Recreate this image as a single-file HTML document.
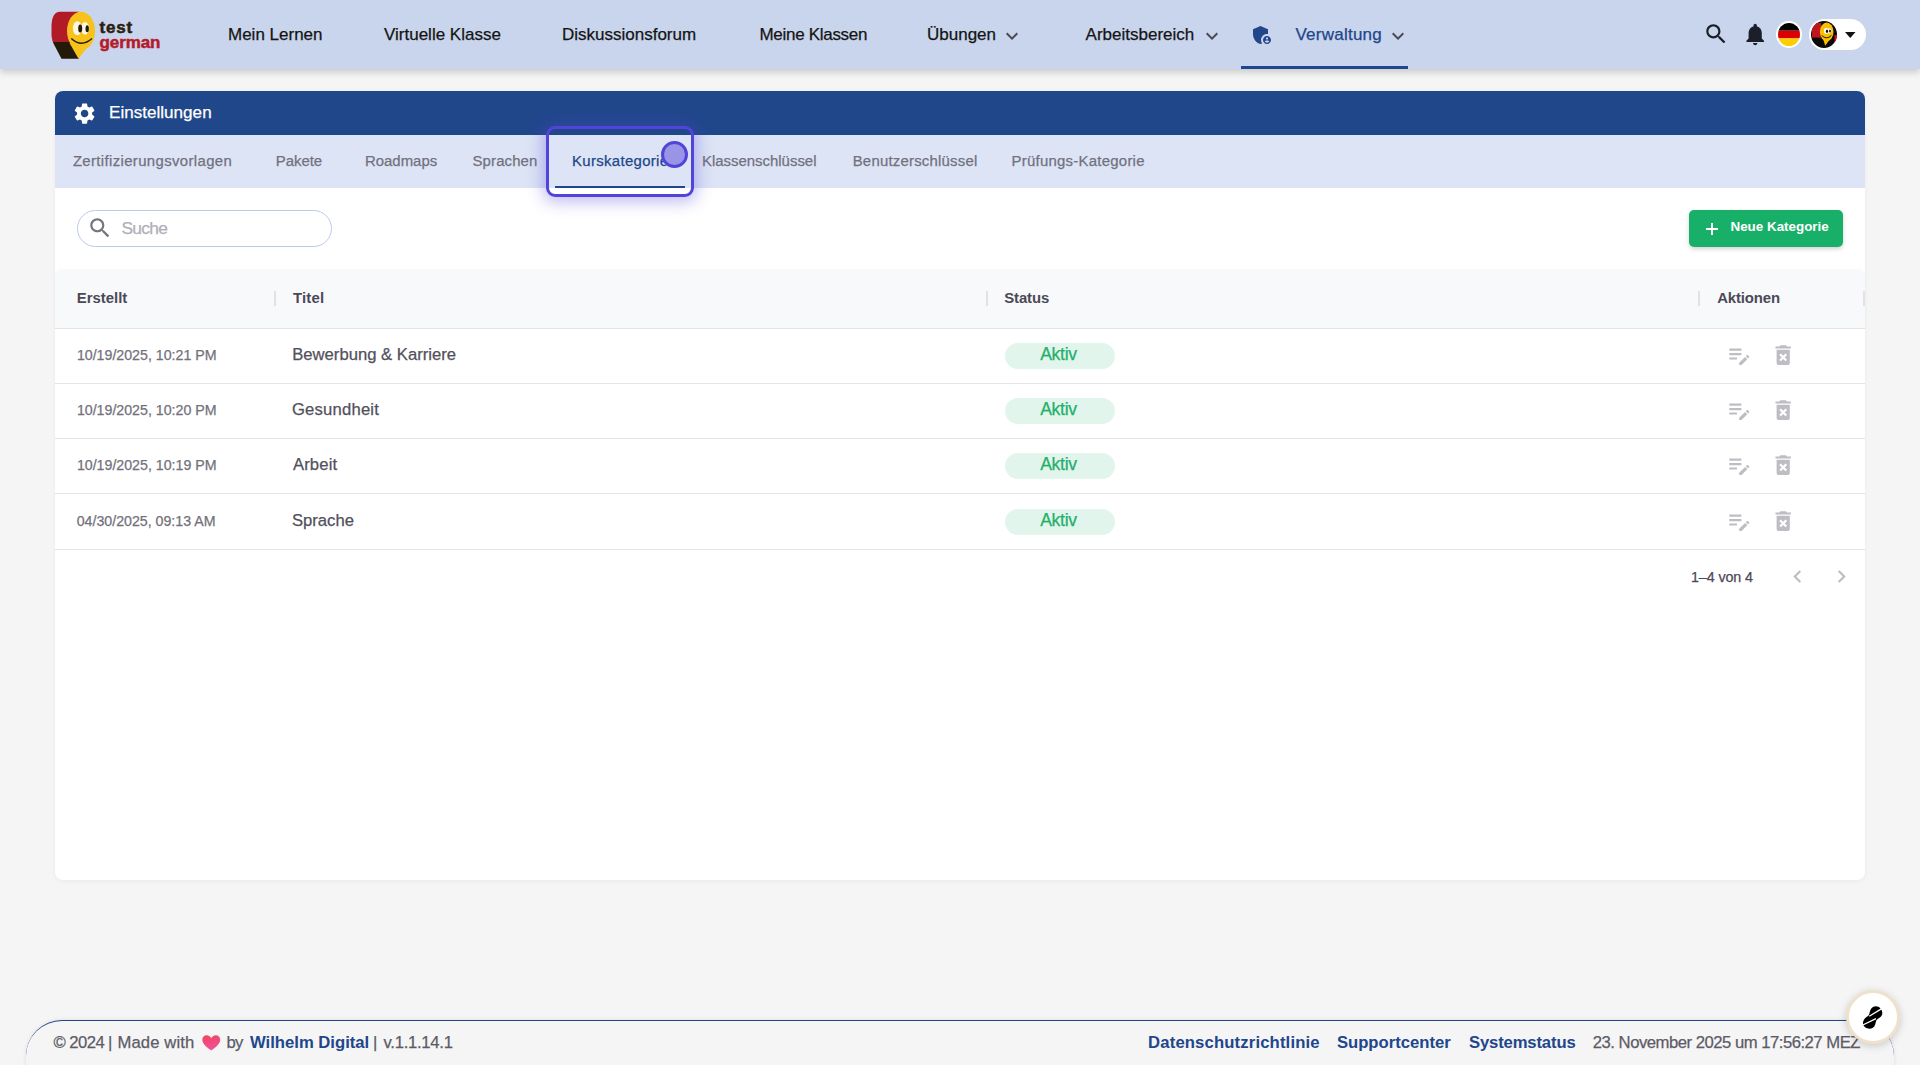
<!DOCTYPE html>
<html><head><meta charset="utf-8">
<style>
*{box-sizing:border-box;margin:0;padding:0}
html,body{width:1920px;height:1065px;overflow:hidden;background:#f5f5f5;font-family:"Liberation Sans",sans-serif;position:relative}
.a{position:absolute;white-space:nowrap;line-height:1;-webkit-text-stroke:0.25px currentColor}
svg{position:absolute;overflow:visible}
#hdr{position:absolute;left:0;top:0;width:1920px;height:69px;background:#c9d5ec;box-shadow:0 3px 7px rgba(0,0,0,.19)}
.nav{font-size:17px;color:#141414;top:25.7px}
#card{position:absolute;left:55px;top:91px;width:1810px;height:789px;background:#fff;border-radius:8px;box-shadow:0 1px 4px rgba(0,0,0,.05)}
#cardhead{position:absolute;left:55px;top:91px;width:1810px;height:44px;background:#21478b;border-radius:8px 8px 0 0}
#tabs{position:absolute;left:55px;top:135px;width:1810px;height:53px;background:#dce4f5}
.tab{font-size:14.93px;color:#72717e;top:154.4px}
.th{font-size:14.93px;font-weight:700;color:#4b4957;top:291.4px}
.sep{position:absolute;width:2px;height:15px;top:291px;background:#e1e1e6}
.date{font-size:14.2px;color:#72717b}
.ttl{font-size:16.67px;color:#52505c}
.pill{position:absolute;left:1005px;width:110px;height:26px;border-radius:13px;background:#e2f5ec}
.aktiv{font-size:17.6px;letter-spacing:-0.3px;color:#22b06b}
.hr{position:absolute;left:55px;width:1810px;height:1px;background:#e5e5e9}
.ft{font-size:16.67px;color:#5d5b67;top:1034.8px}
.lnk{font-size:16.67px;font-weight:700;color:#21468b;top:1034.9px}
.th,.lnk,.bd{-webkit-text-stroke:0}
</style></head><body>
<div id="hdr"></div>

<!-- nav -->
<div class="a nav" style="left:228px">Mein Lernen</div>
<div class="a nav" style="left:384px">Virtuelle Klasse</div>
<div class="a nav" style="left:562px">Diskussionsforum</div>
<div class="a nav" style="left:759.5px;letter-spacing:-0.3px">Meine Klassen</div>
<div class="a nav" style="left:927px">Übungen</div>
<div class="a nav" style="left:1085.6px">Arbeitsbereich</div>
<div class="a nav" style="left:1295.4px;color:#21468a;letter-spacing:0.25px">Verwaltung</div>
<div class="a" style="left:1241px;top:66px;width:167px;height:3px;background:#1f4690"></div>
<!-- chevrons -->
<svg style="left:1000px;top:24.4px" width="24" height="24" viewBox="0 0 24 24"><path fill="#4a4955" d="M16.59 8.59 12 13.17 7.41 8.59 6 10l6 6 6-6z"/></svg>
<svg style="left:1200px;top:24.4px" width="24" height="24" viewBox="0 0 24 24"><path fill="#4a4955" d="M16.59 8.59 12 13.17 7.41 8.59 6 10l6 6 6-6z"/></svg>
<svg style="left:1386px;top:24.4px" width="24" height="24" viewBox="0 0 24 24"><path fill="#4a4955" d="M16.59 8.59 12 13.17 7.41 8.59 6 10l6 6 6-6z"/></svg>
<!-- shield -->
<svg style="left:1250px;top:23px" width="24" height="24" viewBox="0 0 24 24"><path fill="#21468b" d="M17 11c.34 0 .67.04 1 .09V6.27L10.5 3 3 6.27v4.91c0 4.54 3.2 8.79 7.5 9.82.55-.13 1.08-.32 1.6-.55-.69-.98-1.1-2.17-1.1-3.45 0-3.31 2.69-6 6-6zM17 13c-2.21 0-4 1.79-4 4s1.79 4 4 4 4-1.79 4-4-1.79-4-4-4zm0 1.38c.62 0 1.12.51 1.12 1.12s-.51 1.12-1.12 1.12-1.12-.51-1.12-1.12.5-1.12 1.12-1.12zm0 5.37c-.93 0-1.74-.46-2.24-1.17.05-.72 1.51-1.08 2.24-1.08s2.19.36 2.24 1.08c-.5.71-1.31 1.17-2.24 1.17z"/></svg>
<!-- search -->
<svg style="left:1702.7px;top:20.7px" width="26.2" height="26.2" viewBox="0 0 24 24"><path fill="#1b1f2a" d="M15.5 14h-.79l-.28-.27C15.41 12.59 16 11.11 16 9.5 16 5.91 13.09 3 9.5 3S3 5.91 3 9.5 5.91 16 9.5 16c1.61 0 3.09-.59 4.23-1.57l.27.28v.79l5 4.99L20.49 19l-4.99-5zm-6 0C7.01 14 5 11.99 5 9.5S7.01 5 9.5 5 14 7.01 14 9.5 11.99 14 9.5 14z"/></svg>
<!-- bell -->
<svg style="left:1741.6px;top:21.2px" width="26.4" height="26.4" viewBox="0 0 24 24"><path fill="#1b1f2a" d="M12 22c1.1 0 2-.9 2-2h-4c0 1.1.89 2 2 2zm6-6v-5c0-3.07-1.64-5.64-4.5-6.32V4c0-.83-.67-1.5-1.5-1.5s-1.5.67-1.5 1.5v.68C7.63 5.36 6 7.92 6 11v5l-2 2v1h16v-1l-2-2z"/></svg>
<!-- flag -->
<div class="a" style="left:1776px;top:21px;width:26px;height:27px;border-radius:50%;background:#fff"></div>
<svg style="left:1778px;top:23px" width="22" height="23" viewBox="0 0 22 23"><defs><clipPath id="fc"><ellipse cx="11" cy="11.5" rx="11" ry="11.5"/></clipPath></defs><g clip-path="url(#fc)"><rect x="0" y="0" width="22" height="7.7" fill="#000"/><rect x="0" y="7.7" width="22" height="7.7" fill="#dd0000"/><rect x="0" y="15.4" width="22" height="8" fill="#ffce00"/></g></svg>
<!-- avatar pill -->
<div class="a" style="left:1809px;top:18.5px;width:57px;height:31.5px;border-radius:16px;background:#fff"></div>
<svg style="left:1811px;top:21px" width="26" height="27" viewBox="0 0 26 27"><defs><clipPath id="ac"><ellipse cx="13" cy="13.5" rx="13" ry="13.5"/></clipPath></defs><g clip-path="url(#ac)"><rect width="26" height="27" fill="#0a0a0a"/><rect x="1" y="2" width="9" height="14.6" fill="#c0141f"/><path d="M23.5 14 L26 14 L26 21 L23.5 21Z" fill="#c0141f"/><ellipse cx="15.7" cy="10.8" rx="6.8" ry="9.3" fill="#f9c000"/><path d="M11.2 15 L19.5 17.5 L14.2 24.8Z" fill="#f9c000"/><ellipse cx="15.3" cy="10" rx="2.4" ry="2.9" fill="#fff"/><ellipse cx="18.4" cy="9.8" rx="2" ry="2.6" fill="#fff"/><ellipse cx="16" cy="10.3" rx="1.1" ry="1.7" fill="#0a0a0a"/><ellipse cx="19" cy="10.1" rx="0.9" ry="1.5" fill="#0a0a0a"/><path d="M10.7 14.4 Q15.5 19.3 20.4 14.4" stroke="#0a0a0a" stroke-width="0.9" fill="none"/></g></svg>
<svg style="left:1845px;top:31.7px" width="11" height="6" viewBox="0 0 11 6"><path d="M0 0h10.5L5.25 6z" fill="#111"/></svg>
<!-- logo -->
<svg style="left:0;top:0" width="170" height="69" viewBox="0 0 170 69">
<defs><clipPath id="lc"><path d="M79 11.7 L60 11.7 Q51.5 12 51.5 27 L51.5 36 Q52 41 54 44.5 L61.5 58.7 L79 58.7Z"/></clipPath></defs>
<g clip-path="url(#lc)"><rect x="40" y="0" width="50" height="42" fill="#b11b28"/><rect x="40" y="42" width="50" height="20" fill="#231a0a"/></g>
<ellipse cx="81" cy="31" rx="14" ry="19.3" fill="#f7c21c"/>
<path d="M69.5 43 L86 49 L78.5 58.7 Z" fill="#f7c21c"/>
<ellipse cx="77.3" cy="28.3" rx="4.4" ry="7" fill="#fdf6e0"/>
<ellipse cx="85" cy="28.2" rx="4" ry="6.3" fill="#fdf6e0"/>
<ellipse cx="80.2" cy="28.5" rx="2" ry="3.9" fill="#231a0a"/>
<ellipse cx="87.2" cy="28.8" rx="1.7" ry="3.5" fill="#231a0a"/>
<path d="M71.3 38.5 Q81.5 48 92 38.6" stroke="#231a0a" stroke-width="1.4" fill="none"/>
<text x="99.5" y="32.5" font-family="Liberation Sans" font-weight="700" font-size="17" fill="#2a200e" stroke="#2a200e" stroke-width="0.5" letter-spacing="0.85">test</text>
<text x="99.5" y="48" font-family="Liberation Sans" font-weight="700" font-size="17" fill="#b51a2b" stroke="#b51a2b" stroke-width="0.5" letter-spacing="-0.1">german</text>
</svg>

<div id="card"></div>
<div id="cardhead"></div>
<div id="tabs"></div>
<div class="a" style="left:109px;top:103.5px;font-size:17.1px;color:#fff">Einstellungen</div>
<div class="a tab" style="left:72.9px;letter-spacing:0.36px">Zertifizierungsvorlagen</div>
<div class="a tab" style="left:275.7px">Pakete</div>
<div class="a tab" style="left:365px">Roadmaps</div>
<div class="a tab" style="left:472.5px;letter-spacing:0.14px">Sprachen</div>
<div class="a tab" style="left:572px;letter-spacing:0.33px;color:#21468a">Kurskategorie</div>
<div class="a tab" style="left:702px">Klassenschlüssel</div>
<div class="a tab" style="left:852.7px;letter-spacing:0.22px">Benutzerschlüssel</div>
<div class="a tab" style="left:1011.5px;letter-spacing:0.26px">Prüfungs-Kategorie</div>
<div class="a" style="left:555px;top:186px;width:130px;height:2px;background:#1f4690"></div>

<!-- search -->
<div class="a" style="left:77px;top:210px;width:255px;height:37px;border:1px solid #bccaea;border-radius:19px;background:#fff"></div>
<div class="a" style="left:121.5px;top:220.2px;font-size:17.4px;letter-spacing:-0.75px;color:#b0afb8">Suche</div>

<!-- button -->
<div class="a" style="left:1689px;top:210px;width:154px;height:37px;border-radius:5px;background:#18b068;box-shadow:0 2px 4px rgba(0,0,0,.18)"></div>
<div class="a" style="left:1730.5px;top:220.2px;font-size:13.4px;font-weight:700;letter-spacing:0px;color:#fff;-webkit-text-stroke:0">Neue Kategorie</div>
<div class="a" style="left:1706px;top:228px;width:12px;height:2px;background:#fff"></div>
<div class="a" style="left:1711px;top:223px;width:2px;height:12px;background:#fff"></div>

<!-- table header -->
<div class="a" style="left:55px;top:269px;width:1810px;height:59px;background:#f8f9fb;border-radius:6px 6px 0 0"></div>
<div class="hr" style="top:328px;height:1px;background:#e3e3e7"></div>
<div class="a th" style="left:76.7px">Erstellt</div>
<div class="a th" style="left:293px;letter-spacing:0.19px">Titel</div>
<div class="a th" style="left:1004.3px;letter-spacing:-0.14px">Status</div>
<div class="a th" style="left:1717.2px;letter-spacing:-0.13px">Aktionen</div>
<div class="sep" style="left:274px"></div>
<div class="sep" style="left:986px"></div>
<div class="sep" style="left:1698px"></div>
<div class="sep" style="left:1863px"></div>

<!-- rows -->
<div class="hr" style="top:383px"></div>
<div class="hr" style="top:438px"></div>
<div class="hr" style="top:493px"></div>
<div class="hr" style="top:549px"></div>

<div class="a date" style="left:76.9px;top:348px">10/19/2025, 10:21 PM</div>
<div class="a date" style="left:76.9px;top:403px">10/19/2025, 10:20 PM</div>
<div class="a date" style="left:76.9px;top:458px">10/19/2025, 10:19 PM</div>
<div class="a date" style="left:76.7px;top:513.6px">04/30/2025, 09:13 AM</div>

<div class="a ttl" style="left:292.2px;top:346.5px">Bewerbung &amp; Karriere</div>
<div class="a ttl" style="left:291.9px;top:402.3px;letter-spacing:0.2px">Gesundheit</div>
<div class="a ttl" style="left:292.9px;top:456.7px;letter-spacing:0.16px">Arbeit</div>
<div class="a ttl" style="left:291.9px;top:512.5px">Sprache</div>

<div class="pill" style="top:343px"></div>
<div class="pill" style="top:398px"></div>
<div class="pill" style="top:453px"></div>
<div class="pill" style="top:508.7px"></div>
<div class="a aktiv" style="left:1040.2px;top:345.6px">Aktiv</div>
<div class="a aktiv" style="left:1040.2px;top:400.6px">Aktiv</div>
<div class="a aktiv" style="left:1040.2px;top:456.1px">Aktiv</div>
<div class="a aktiv" style="left:1040.2px;top:512.1px">Aktiv</div>

<!-- pagination -->
<div class="a" style="left:1691px;top:570px;font-size:14.3px;letter-spacing:-0.1px;color:#4b4957">1–4 von 4</div>

<!-- footer -->
<div class="a" style="left:26px;top:1020px;width:1868px;height:90px;border-top:1.5px solid #21468b;border-radius:36px;box-shadow:0 0 4px rgba(0,0,0,.10)"></div>
<div class="a ft" style="left:53.5px;letter-spacing:-0.55px">© 2024</div>
<div class="a ft" style="left:108px">|</div>
<div class="a ft" style="left:117.4px;letter-spacing:0.12px">Made with</div>
<div class="a ft" style="left:226.5px;letter-spacing:-0.75px">by</div>
<div class="a ft bd" style="left:250px;font-weight:700;color:#21468b">Wilhelm Digital</div>
<div class="a ft" style="left:373px">|</div>
<div class="a ft" style="left:383.5px;letter-spacing:-0.28px">v.1.1.14.1</div>
<div class="a lnk" style="left:1148.1px;letter-spacing:0.15px">Datenschutzrichtlinie</div>
<div class="a lnk" style="left:1336.9px">Supportcenter</div>
<div class="a lnk" style="left:1469px;letter-spacing:-0.15px">Systemstatus</div>
<div class="a ft" style="left:1592.8px;top:1034.9px;letter-spacing:-0.49px">23. November 2025 um 17:56:27 MEZ</div>

<!-- gear -->
<svg style="left:71.9px;top:100.7px" width="25.2" height="25.2" viewBox="0 0 24 24"><path fill="#fff" d="M19.14 12.94c.04-.3.06-.61.06-.94 0-.32-.02-.64-.07-.94l2.03-1.58c.18-.14.23-.41.12-.61l-1.92-3.32c-.12-.22-.37-.29-.59-.22l-2.39.96c-.5-.38-1.030-.7-1.62-.94l-.36-2.54c-.04-.24-.24-.41-.48-.41h-3.84c-.24 0-.43.17-.47.41l-.36 2.54c-.59.24-1.13.57-1.62.94l-2.39-.96c-.22-.08-.47 0-.59.22L2.74 8.87c-.12.21-.08.47.12.61l2.03 1.58c-.05.3-.09.63-.09.94s.02.64.07.94l-2.03 1.58c-.18.14-.23.41-.12.61l1.92 3.32c.12.22.37.29.59.22l2.39-.96c.5.38 1.03.7 1.62.94l.36 2.54c.05.24.24.41.48.41h3.84c.24 0 .44-.17.47-.41l.36-2.54c.59-.24 1.13-.56 1.62-.94l2.39.96c.22.08.47 0 .59-.22l1.92-3.32c.12-.22.07-.47-.12-.61l-2.01-1.58zM12 15.6c-1.98 0-3.6-1.62-3.6-3.6s1.62-3.6 3.6-3.6 3.6 1.62 3.6 3.6-1.62 3.6-3.6 3.6z"/></svg>
<!-- search input icon -->
<svg style="left:86.7px;top:215.1px" width="26" height="26" viewBox="0 0 24 24"><path fill="#75737d" d="M15.5 14h-.79l-.28-.27C15.41 12.59 16 11.11 16 9.5 16 5.91 13.09 3 9.5 3S3 5.91 3 9.5 5.91 16 9.5 16c1.61 0 3.09-.59 4.230-1.57l.27.28v.79l5 4.99L20.49 19l-4.99-5zm-6 0C7.01 14 5 11.99 5 9.5S7.01 5 9.5 5 14 7.01 14 9.5 11.99 14 9.5 14z"/></svg>
<svg style="left:1726px;top:342px" width="26.4" height="26.4" viewBox="0 0 24 24"><path fill="#bebdc4" d="M3 10h11v2H3v-2zm0-2h11V6H3v2zm0 8h7v-2H3v2zm15.01-3.13.71-.71c.39-.39 1.02-.39 1.41 0l.71.71c.39.39.39 1.02 0 1.41l-.71.71-2.12-2.12zm-.71.71-5.3 5.3V21h2.12l5.3-5.3-2.12-2.12z"/></svg>
<svg style="left:1770px;top:342px" width="26.4" height="26.4" viewBox="0 0 24 24"><path fill="#bebdc4" d="M6 19c0 1.1.9 2 2 2h8c1.1 0 2-.9 2-2V7H6v12zm2.46-7.12 1.41-1.41L12 12.59l2.12-2.12 1.41 1.41L13.41 14l2.12 2.12-1.41 1.41L12 15.41l-2.12 2.12-1.41-1.41L10.59 14l-2.13-2.12zM15.5 4l-1-1h-5l-1 1H5v2h14V4z"/></svg>
<svg style="left:1726px;top:397px" width="26.4" height="26.4" viewBox="0 0 24 24"><path fill="#bebdc4" d="M3 10h11v2H3v-2zm0-2h11V6H3v2zm0 8h7v-2H3v2zm15.01-3.13.71-.71c.39-.39 1.02-.39 1.41 0l.71.71c.39.39.39 1.02 0 1.41l-.71.71-2.12-2.12zm-.71.71-5.3 5.3V21h2.12l5.3-5.3-2.12-2.12z"/></svg>
<svg style="left:1770px;top:397px" width="26.4" height="26.4" viewBox="0 0 24 24"><path fill="#bebdc4" d="M6 19c0 1.1.9 2 2 2h8c1.1 0 2-.9 2-2V7H6v12zm2.46-7.12 1.41-1.41L12 12.59l2.12-2.12 1.41 1.41L13.41 14l2.12 2.12-1.41 1.41L12 15.41l-2.12 2.12-1.41-1.41L10.59 14l-2.13-2.12zM15.5 4l-1-1h-5l-1 1H5v2h14V4z"/></svg>
<svg style="left:1726px;top:452px" width="26.4" height="26.4" viewBox="0 0 24 24"><path fill="#bebdc4" d="M3 10h11v2H3v-2zm0-2h11V6H3v2zm0 8h7v-2H3v2zm15.01-3.13.71-.71c.39-.39 1.02-.39 1.41 0l.71.71c.39.39.39 1.02 0 1.41l-.71.71-2.12-2.12zm-.71.71-5.3 5.3V21h2.12l5.3-5.3-2.12-2.12z"/></svg>
<svg style="left:1770px;top:452px" width="26.4" height="26.4" viewBox="0 0 24 24"><path fill="#bebdc4" d="M6 19c0 1.1.9 2 2 2h8c1.1 0 2-.9 2-2V7H6v12zm2.46-7.12 1.41-1.41L12 12.59l2.12-2.12 1.41 1.41L13.41 14l2.12 2.12-1.41 1.41L12 15.41l-2.12 2.12-1.41-1.41L10.59 14l-2.13-2.12zM15.5 4l-1-1h-5l-1 1H5v2h14V4z"/></svg>
<svg style="left:1726px;top:507.5px" width="26.4" height="26.4" viewBox="0 0 24 24"><path fill="#bebdc4" d="M3 10h11v2H3v-2zm0-2h11V6H3v2zm0 8h7v-2H3v2zm15.01-3.13.71-.71c.39-.39 1.02-.39 1.41 0l.71.71c.39.39.39 1.02 0 1.41l-.71.71-2.12-2.12zm-.71.71-5.3 5.3V21h2.12l5.3-5.3-2.12-2.12z"/></svg>
<svg style="left:1770px;top:507.5px" width="26.4" height="26.4" viewBox="0 0 24 24"><path fill="#bebdc4" d="M6 19c0 1.1.9 2 2 2h8c1.1 0 2-.9 2-2V7H6v12zm2.46-7.12 1.41-1.41L12 12.59l2.12-2.12 1.41 1.41L13.41 14l2.12 2.12-1.41 1.41L12 15.41l-2.12 2.12-1.41-1.41L10.59 14l-2.13-2.12zM15.5 4l-1-1h-5l-1 1H5v2h14V4z"/></svg>
<!-- pagination chevrons -->
<svg style="left:1784.7px;top:564px" width="25" height="25" viewBox="0 0 24 24"><path fill="#bdbcc2" d="M15.41 7.41 14 6l-6 6 6 6 1.41-1.41L10.83 12z"/></svg>
<svg style="left:1828.6px;top:564px" width="25" height="25" viewBox="0 0 24 24"><path fill="#bdbcc2" d="M10 6 8.59 7.41 13.17 12l-4.58 4.59L10 18l6-6z"/></svg>
<!-- focus ring -->
<div class="a" style="left:546px;top:126px;width:148px;height:71px;border:3px solid #5244d8;border-radius:9px;box-shadow:0 2px 16px 3px rgba(82,68,216,.36)"></div>
<div class="a" style="left:660.5px;top:141px;width:27px;height:27px;border:3px solid #5244d8;border-radius:50%;background:#9a94e6"></div>
<!-- heart -->
<svg style="left:201.5px;top:1034.5px" width="18.5" height="16" viewBox="0 0 18.5 16"><defs><linearGradient id="hg" x1="0" y1="0" x2="0.3" y2="1"><stop offset="0" stop-color="#f2455a"/><stop offset="1" stop-color="#ee4f9e"/></linearGradient></defs><path d="M9.25 15.6 C6 13 0.3 9.6 0.3 4.8 C0.3 2 2.3 0.3 4.7 0.3 C6.9 0.3 8.3 1.7 9.25 3.2 C10.2 1.7 11.6 0.3 13.8 0.3 C16.2 0.3 18.2 2 18.2 4.8 C18.2 9.6 12.5 13 9.25 15.6Z" fill="url(#hg)"/></svg>
<!-- float button -->
<div class="a" style="left:1845.6px;top:990.3px;width:54px;height:54px;border-radius:50%;background:#fff;border:3.5px solid #eee2cc;box-shadow:0 2px 8px rgba(0,0,0,.18)"></div>
<svg style="left:1855px;top:1000px" width="35" height="35" viewBox="0 0 35 35"><path d="M21 6.2 C24 6.2 27.2 9 27.3 13 C27.4 16 24.5 18 22.3 19.2 C20.8 20.5 20.8 22.5 20.2 24.5 C19.2 27.5 17 28.7 14.5 28.7 C11.5 28.7 8.2 26.8 8 23.5 C7.9 19.8 11 17 13.3 15.8 C14.6 14.5 14.6 12 15.3 10.3 C16.4 7.7 18.5 6.2 21 6.2Z" fill="#000"/><path d="M14.2 16.2 L26.8 8.6 M7.8 25 L21 18.6" stroke="#fff" stroke-width="1.3"/></svg>
</body></html>
